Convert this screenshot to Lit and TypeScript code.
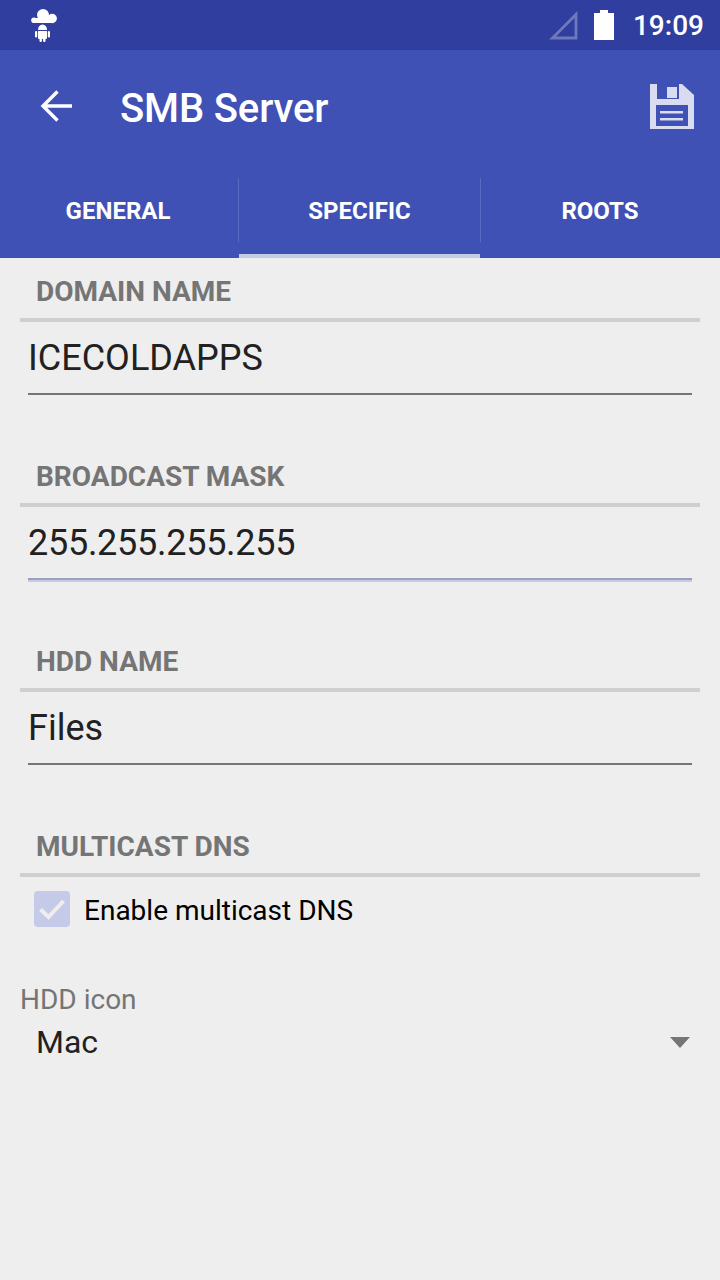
import { LitElement, html, css } from "lit";
import { customElement } from "lit/decorators.js";

@customElement("app-root")
export class AppRoot extends LitElement {
  static styles = css`
    :host { display: block; width: 720px; height: 1280px; background: #eeeeee; font-family: Roboto, "Liberation Sans", sans-serif; overflow: hidden; }
    .status { height: 50px; background: #303f9f; display: flex; align-items: center; color: #fff; }
    .notif { width: 30px; height: 36px; margin: 0 0 0 29px; display: block; }
    .spacer { flex: 1; }
    .signal { width: 29px; height: 29px; margin: 0 16px 0 0; display: block; }
    .battery { width: 20px; height: 30px; margin: -1px 19px 0 0; display: block; }
    .time { font-size: 28px; font-weight: 500; line-height: 34px; margin: 2px 16px 0 0; }
    .head { background: #3f51b5; height: 208px; color: #fff; display: flex; flex-direction: column; }
    .bar { height: 112px; display: flex; align-items: center; }
    .back { width: 34px; height: 34px; margin: 0 47px 0 39px; display: block; }
    .title { font-size: 40px; font-weight: 500; line-height: 44px; flex: 1; margin-top: 6px; letter-spacing: -.15px; }
    .save { width: 44px; height: 45px; margin: 0 26px 0 0; display: block; }
    .tabs { height: 96px; display: grid; grid-template-columns: 239px 241px 240px; }
    .tab { position: relative; display: flex; align-items: center; justify-content: center; font-size: 24px; font-weight: 700; padding-top: 1px; }
    .tab:first-child { padding-right: 3px; }
    .tab.on::before { content: ""; position: absolute; left: -1px; top: 16px; height: 64px; width: 1px; background: rgba(255,255,255,.15); }
    .tab:last-child::before { content: ""; position: absolute; left: 0; top: 16px; height: 64px; width: 1px; background: rgba(255,255,255,.15); }
    .tab.on::after { content: ""; position: absolute; left: 0; right: 0; bottom: 0; height: 4px; background: #c5cae9; }
    main { padding: 17px 20px 0; }
    .sec { margin-bottom: 65px; }
    .label { font-size: 28px; font-weight: 700; line-height: 32px; color: #757575; padding: 1px 16px 10px; border-bottom: 4px solid #cfcfcf; }
    .input { margin: 0 8px; height: 70px; line-height: 70px; font-size: 36px; color: #212121; padding-top: 1px; border-bottom: 2px solid #757575; }
    .input.focus { border-bottom-color: #9aa1bf; box-shadow: 0 2px 0 #c5cae9; letter-spacing: -.27px; }
    .sec.last { margin-bottom: 0; }
    .check { display: flex; align-items: center; margin: 14px 0 0 14px; font-size: 28px; color: #000; }
    .check span { margin-top: 2px; }
    .box { width: 36px; height: 36px; border-radius: 4px; background: #c5cae9; margin-right: 14px; display: block; }
    .cap { font-size: 28px; line-height: 32px; color: #757575; margin-top: 57px; }
    .select { display: flex; align-items: center; justify-content: space-between; margin-top: 6px; padding: 0 10px 0 16px; font-size: 32px; line-height: 40px; color: #212121; }
    .caret { width: 20px; height: 11px; display: block; }
  `;

  private section(label: string, value: string, focus = false) {
    return html`<section class="sec">
      <div class="label">${label}</div>
      <div class="input ${focus ? "focus" : ""}">${value}</div>
    </section>`;
  }

  render() {
    return html`
      <div class="status">
        <svg class="notif" viewBox="0 0 30 36" fill="#fff">
          <circle cx="5" cy="13.300" r="2.800"/><circle cx="14" cy="8" r="6"/><circle cx="23.200" cy="11.500" r="4.700"/><rect x="5" y="11" width="18" height="5"/>
          <path d="M9 23a4.500 5.500 0 0 1 9 0z"/>
          <path d="M9 24h9v7a1 1 0 0 1-1 1H10a1 1 0 0 1-1-1z"/>
          <rect x="6" y="24" width="2.200" height="6.500" rx="1.100"/><rect x="18.800" y="24" width="2.200" height="6.500" rx="1.100"/>
          <rect x="10.500" y="31" width="2.400" height="4" rx="1"/><rect x="14.100" y="31" width="2.400" height="4" rx="1"/>
        </svg>
        <div class="spacer"></div>
        <svg class="signal" viewBox="0 0 29 29">
          <path d="M27 3.500V27H3.500z" fill="none" stroke="#fff" stroke-opacity=".3" stroke-width="2.800"/>
        </svg>
        <svg class="battery" viewBox="0 0 20 30" fill="#fff"><path d="M6 0h8v3h6v27H0V3h6z"/></svg>
        <div class="time">19:09</div>
      </div>
      <div class="head">
        <div class="bar">
          <svg class="back" viewBox="0 0 34 34" fill="none" stroke="#fff" stroke-width="3.400">
            <path d="M33 17H4M18.500 2.500 4 17l14.500 14.500"/>
          </svg>
          <div class="title">SMB Server</div>
          <svg class="save" viewBox="0 0 44 45">
            <path fill="#d9dcf0" fill-rule="evenodd" d="M0 0h7v15h22V0h3l12 11v34H0zM6 21v21h32V21zM17 3h10v11H17zM10 27h23v2.500H10zM10 34h23v2.500H10z"/>
          </svg>
        </div>
        <div class="tabs">
          <div class="tab">GENERAL</div>
          <div class="tab on">SPECIFIC</div>
          <div class="tab">ROOTS</div>
        </div>
      </div>
      <main>
        ${this.section("DOMAIN NAME", "ICECOLDAPPS")}
        ${this.section("BROADCAST MASK", "255.255.255.255", true)}
        ${this.section("HDD NAME", "Files")}
        <section class="sec last">
          <div class="label">MULTICAST DNS</div>
          <div class="check">
            <svg class="box" viewBox="0 0 36 36"><path d="M6.500 18.500 14.500 26 29.500 10" fill="none" stroke="#eeeeee" stroke-width="4"/></svg>
            <span>Enable multicast DNS</span>
          </div>
        </section>
        <div class="cap">HDD icon</div>
        <div class="select">
          <span>Mac</span>
          <svg class="caret" viewBox="0 0 20 11"><path d="M0 0h20L10 11z" fill="#757575"/></svg>
        </div>
      </main>
    `;
  }
}
